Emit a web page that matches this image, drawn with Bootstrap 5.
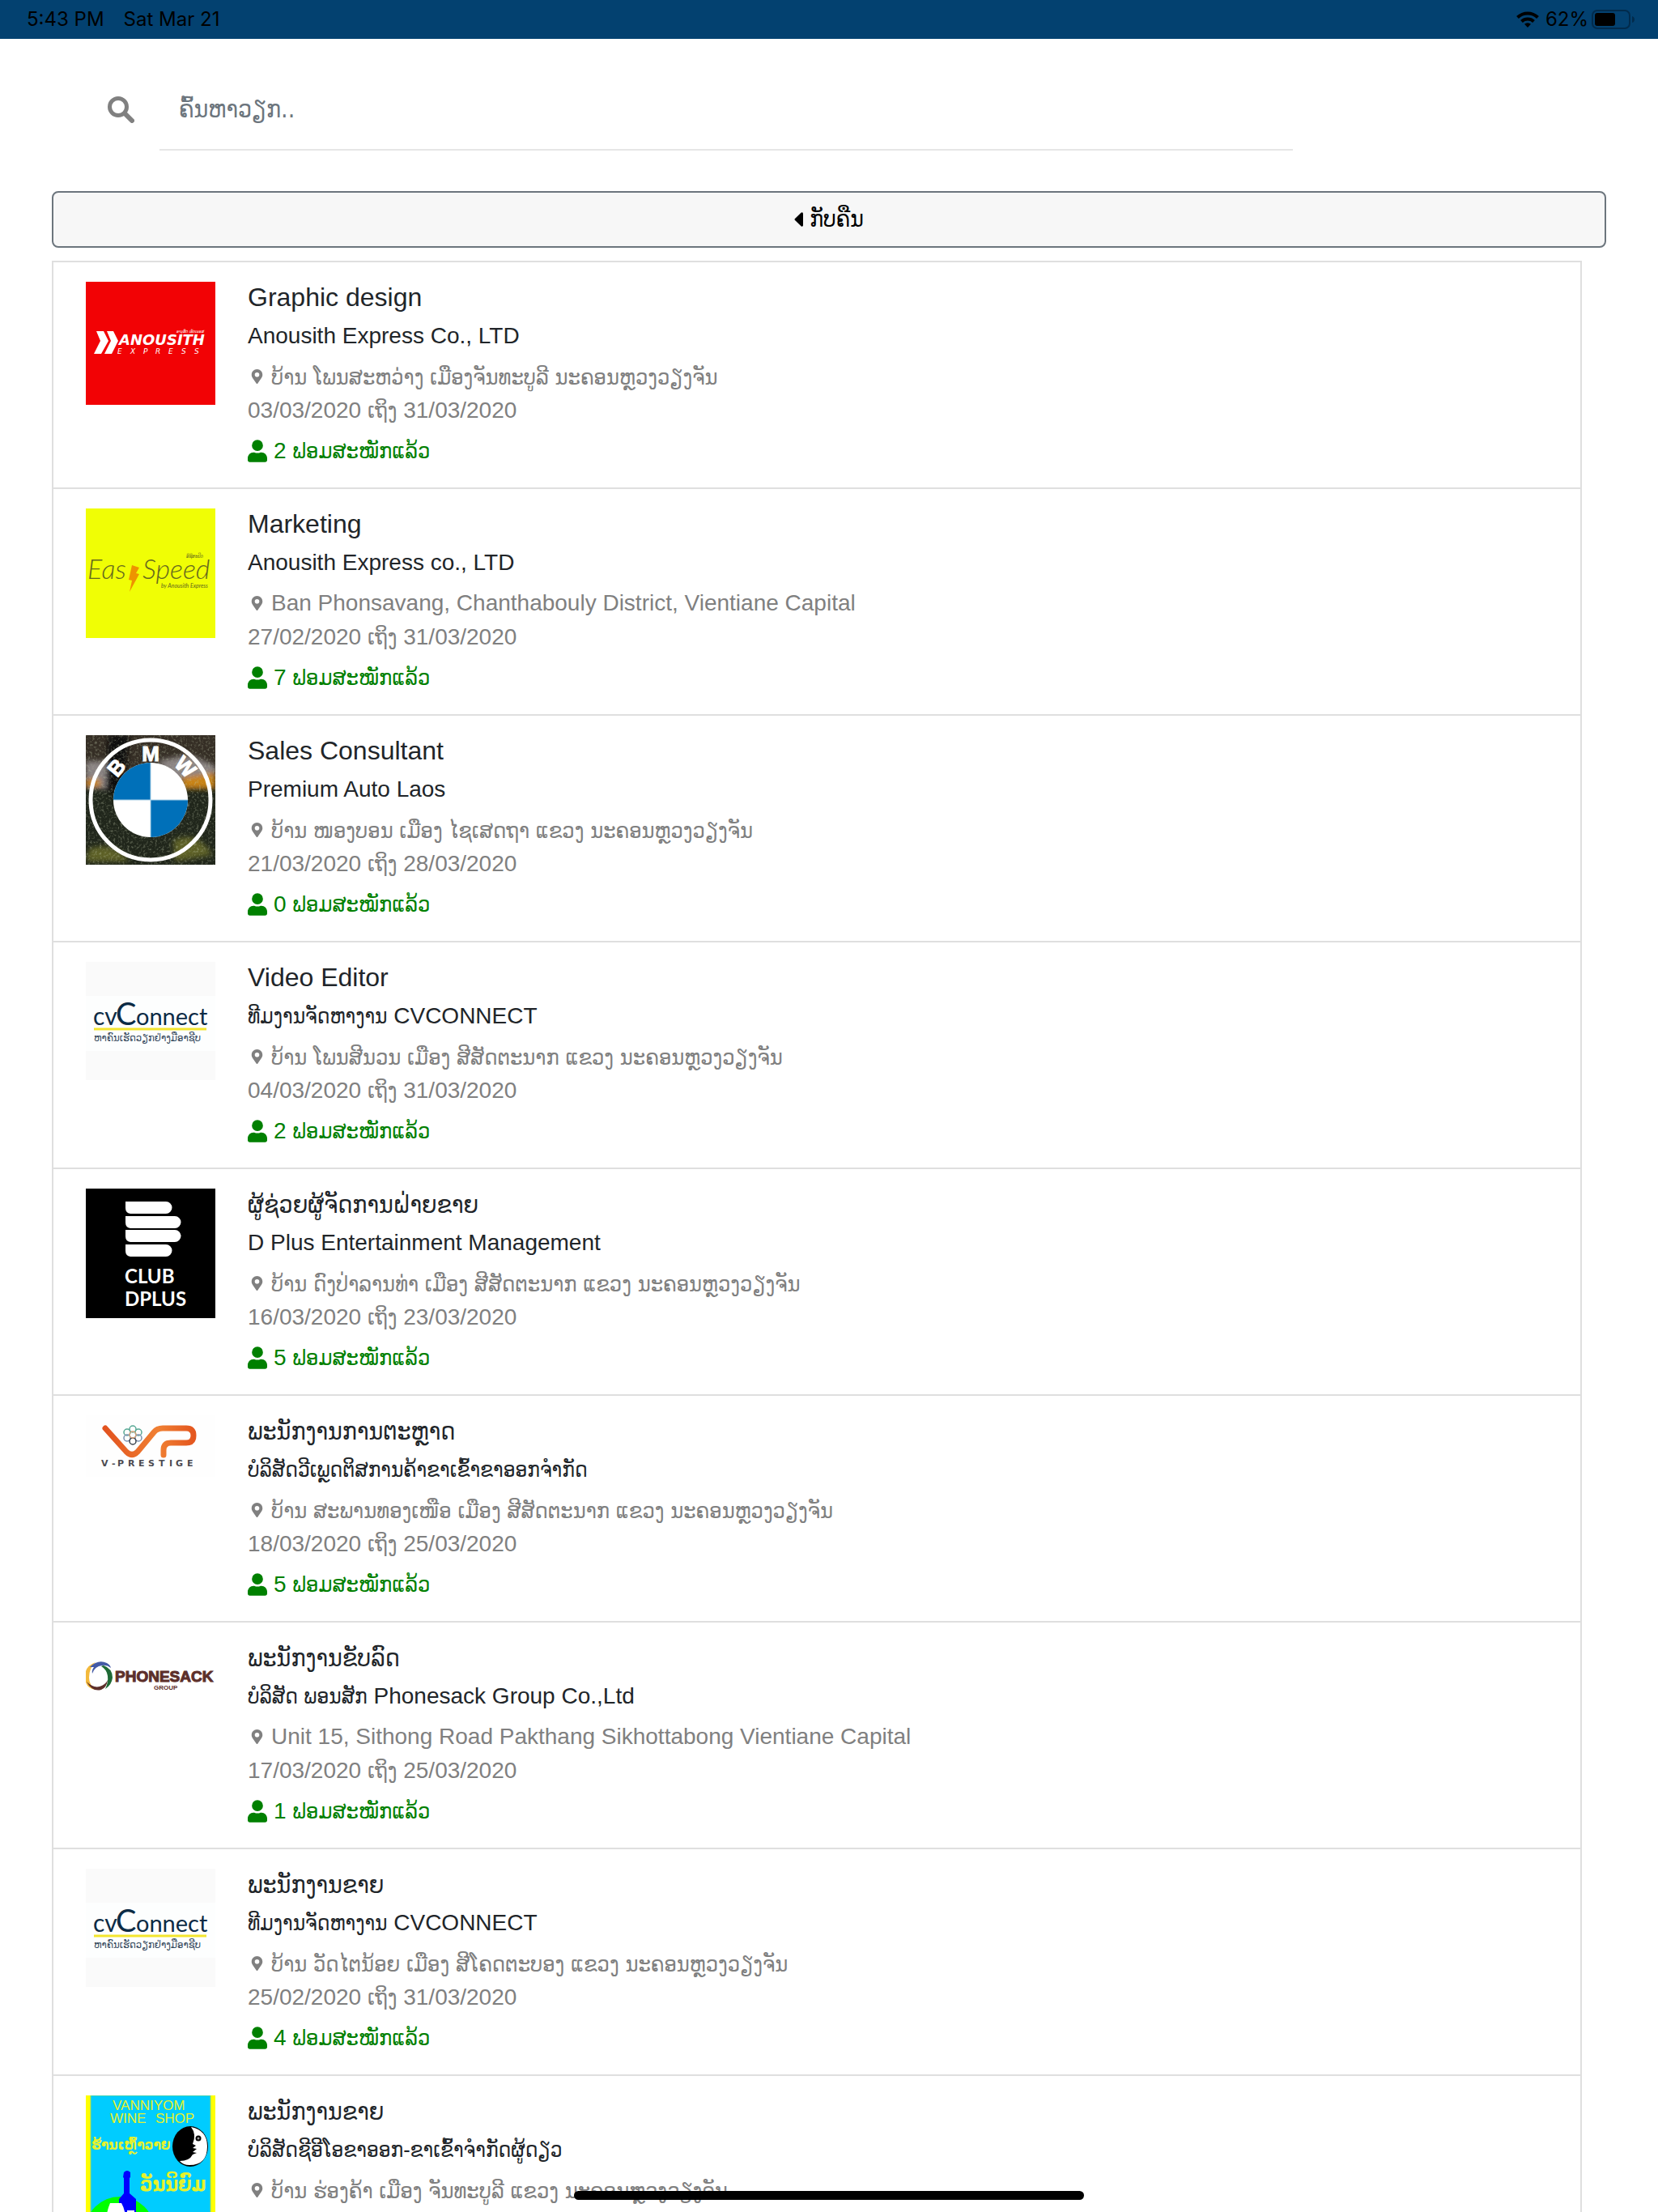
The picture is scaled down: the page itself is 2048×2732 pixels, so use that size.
<!DOCTYPE html>
<html lang="lo">
<head>
<meta charset="utf-8">
<meta name="viewport" content="width=device-width, initial-scale=1">
<title>ຄົ້ນຫາວຽກ</title>
<link href="https://cdn.jsdelivr.net/npm/bootstrap@5.3.0/dist/css/bootstrap.min.css" rel="stylesheet">
<script src="https://cdn.jsdelivr.net/npm/bootstrap@5.3.0/dist/js/bootstrap.bundle.min.js"></script>
<style>
  body { font: 28px/42px "Liberation Sans", "DejaVu Sans Condensed", sans-serif; color: #212529; background: #fff; }
  svg { flex: none; }
  .lao { font-family: "DejaVu Sans Condensed", "DejaVu Sans", sans-serif; font-size: 27px; line-height: 1; }
  .status-bar { height: 48px; padding: 0 28px 0 33px; background: #034170; color: #000; font: 24px/48px Inter, "Liberation Sans", sans-serif; }
  .page-body { padding: 0 64px; }
  .search-form { padding: 36px 0 50px 69px; gap: 31px; }
  .search-input { width: 100%; max-width: 1400px; height: 102px; padding: 0 24px; border: 0; border-bottom: 2px solid #e6e6e6; border-radius: 0; box-shadow: none !important; font: 30px/42px "DejaVu Sans Condensed", "DejaVu Sans", sans-serif; color: #495057; }
  .search-input::placeholder { color: #6c757d; opacity: 1; }
  .back-btn { height: 70px; border: 2px solid #6c757d; border-radius: 8px; background: #f7f7f7; color: #000; font: 28px/42px "DejaVu Sans Condensed", "DejaVu Sans", sans-serif; }
  .job-list { margin: 16px 30px 0 0; border: 2px solid #dfdfdf; border-bottom: 0; }
  .job { min-height: 280px; padding: 24px 40px; gap: 40px; border-bottom: 2px solid #dfdfdf; color: inherit; text-decoration: none; }
  .job-logo { width: 160px; flex: none; }
  .job-logo svg { display: block; }
  .job-title { font-size: 32px; line-height: 38px; font-weight: 400; }
  .job-title .lao { font-size: 30px; }
  .job-firm .lao { font-size: 26px; }
  .muted-line { min-height: 42px; color: #808080; }
  .place-line { gap: 6px; }
  .applied { color: #008000; }
  .home-bar { bottom: 15px; width: 630px; height: 11px; border-radius: 6px; background: #000; }
</style>
</head>
<body class="vh-100 overflow-hidden">

<svg width="0" height="0" class="position-absolute" aria-hidden="true">
  <symbol id="pin" viewBox="0 0 384 512"><path fill="currentColor" d="M172 502C27 291 0 270 0 192 0 86 86 0 192 0s192 86 192 192c0 78-27 99-172 310-10 13-30 13-40 0zM192 272a80 80 0 1 0 0-160 80 80 0 0 0 0 160z"/></symbol>
  <symbol id="user" viewBox="0 0 448 512"><path fill="currentColor" d="M224 256a128 128 0 1 0 0-256 128 128 0 0 0 0 256zm90 32h-17a174 174 0 0 1-146 0h-17C60 288 0 348 0 422v42c0 27 21 48 48 48h352c27 0 48-21 48-48v-42c0-74-60-134-134-134z"/></symbol>
</svg>

<div class="d-flex flex-column">
  <header class="status-bar d-flex justify-content-between align-items-center">
    <div class="d-flex"><span>5:43 PM</span><span class="ms-4">Sat Mar 21</span></div>
    <div class="d-flex align-items-center">
      <svg width="28" height="20" viewBox="0 0 28 20" aria-label="Wi-Fi"><g fill="none" stroke="#000" stroke-width="4"><path d="M1.500 7.500a18 18 0 0 1 25 0"/><path d="M6.500 12.500a11 11 0 0 1 15 0"/></g><path d="M14 20l-4-4.200a6 6 0 0 1 8 0z"/></svg>
      <span class="ms-2">62%</span>
      <svg class="ms-1" width="54" height="24" viewBox="0 0 54 24" aria-label="Battery"><rect x="1" y="1" width="46" height="22" rx="6" fill="none" stroke="#022b4c" stroke-width="2"/><rect x="4" y="4" width="25" height="16" rx="3"/><path d="M50 8q3 1 3 4t-3 4z" fill="#022b4c"/></svg>
    </div>
  </header>

  <main class="page-body">
    <form class="search-form d-flex align-items-center" role="search">
      <label for="job-search" class="d-flex"><svg width="33" height="33" viewBox="0 0 33 33" aria-label="ຄົ້ນຫາ"><circle cx="13" cy="13" r="10.500" fill="none" stroke="#808080" stroke-width="5"/><path d="M21.500 21.500L30 30" stroke="#808080" stroke-width="6" stroke-linecap="round"/></svg></label>
      <input id="job-search" class="search-input form-control" type="text" placeholder="ຄົ້ນຫາວຽກ..">
    </form>
    <button type="button" class="back-btn btn w-100 d-flex justify-content-center align-items-center"><svg class="me-2" width="11" height="18" viewBox="0 0 11 18" aria-hidden="true"><path d="M11 1.500v15q-1 2-2.500.7L1 10q-1-1 0-2L8.500.8Q10-.5 11 1.500z"/></svg>ກັບຄືນ</button>

    <section class="job-list">
      <a href="#" class="job d-flex">
        <div class="job-logo">
          <svg width="160" height="152" viewBox="0 0 160 152" aria-label="Anousith Express">
            <rect width="160" height="152" fill="#f20205"/>
            <g fill="#fff"><path d="M13 61h9l6 12-9 16h-9l8-16zM26 61h8l6 12-8 16h-9l8-16z"/>
            <text x="41" y="78" font-size="18" font-weight="700" font-style="italic" font-family="DejaVu Sans, sans-serif">ANOUSITH</text>
            <text x="39 55 71 86 102 118 134" y="89" font-size="9" font-style="italic" font-family="DejaVu Sans, sans-serif">EXPRESS</text>
            <text x="112" y="63" font-size="5" font-style="italic" font-family="DejaVu Sans Condensed, sans-serif">ອານຸສິດ ເອັກເພຣສ</text></g>
          </svg>
        </div>
        <div class="flex-grow-1">
          <h5 class="job-title mb-2">Graphic design</h5>
          <div class="job-firm mb-2">Anousith Express Co., LTD</div>
          <div class="muted-line place-line d-flex align-items-center"><svg width="23" height="18"><use href="#pin"/></svg><span class="lao">ບ້ານ ໂພນສະຫວ່າງ ເມືອງຈັນທະບູລີ ນະຄອນຫຼວງວຽງຈັນ</span></div>
          <div class="muted-line mb-2">03/03/2020 <span class="lao">ເຖິງ</span> 31/03/2020</div>
          <div class="applied d-flex align-items-center"><svg width="24" height="28" class="me-2"><use href="#user"/></svg><div>2 <span class="lao">ຟອມສະໝັກແລ້ວ</span></div></div>
        </div>
      </a>

      <a href="#" class="job d-flex">
        <div class="job-logo">
          <svg width="160" height="160" viewBox="0 0 160 160" aria-label="Easy Speed">
            <rect width="160" height="160" fill="#f0fe05"/>
            <g fill="#65681f" font-family="Lato, sans-serif" font-style="italic" font-weight="300"><text x="2" y="87" font-size="34">Eas</text><text x="70" y="87" font-size="34">Speed</text><text x="93" y="98" font-size="7" font-weight="400">by Anousith Express</text></g>
            <text x="124" y="61" font-size="6" font-style="italic" fill="#65681f" font-family="DejaVu Sans Condensed, sans-serif">ອີຊີສະປີດ</text>
            <path d="M57 70l9 3-4 7 4 1-12 22 3-14-4-1z" fill="#ee9300"/>
          </svg>
        </div>
        <div class="flex-grow-1">
          <h5 class="job-title mb-2">Marketing</h5>
          <div class="job-firm mb-2">Anousith Express co., LTD</div>
          <div class="muted-line place-line d-flex align-items-center"><svg width="23" height="18"><use href="#pin"/></svg><span>Ban Phonsavang, Chanthabouly District, Vientiane Capital</span></div>
          <div class="muted-line mb-2">27/02/2020 <span class="lao">ເຖິງ</span> 31/03/2020</div>
          <div class="applied d-flex align-items-center"><svg width="24" height="28" class="me-2"><use href="#user"/></svg><div>7 <span class="lao">ຟອມສະໝັກແລ້ວ</span></div></div>
        </div>
      </a>

      <a href="#" class="job d-flex">
        <div class="job-logo">
          <svg width="160" height="160" viewBox="0 0 160 160" aria-label="BMW">
            <defs>
              <filter id="leaves" x="0" y="0" width="100%" height="100%"><feTurbulence type="fractalNoise" baseFrequency=".35" numOctaves="3" seed="4"/><feColorMatrix values="0 0 0 0 .5  0 0 0 0 .55  0 0 0 0 .38  3 0 0 0 -1.500"/></filter>
              <filter id="soft"><feGaussianBlur stdDeviation="3"/></filter>
              <clipPath id="photo"><rect width="160" height="160"/></clipPath>
            </defs>
            <g clip-path="url(#photo)">
              <rect width="160" height="160" fill="#20261b"/>
              <rect width="160" height="66" fill="#352e25"/>
              <g filter="url(#soft)"><path d="M0 32h26v34H0zM88 32l40-8 32 14v18l-50-2z" fill="#8b8484"/><path d="M0 54h18v10H0zM118 52l42-6v20h-40z" fill="#c98314"/><path d="M28 0h26l-8 70H24z" fill="#100d0b"/><path d="M4 140q30-10 50 16H0zM108 130q30-14 48 18l-46 8z" fill="#5d6126"/></g>
              <rect width="160" height="160" filter="url(#leaves)" opacity=".4"/>
            </g>
            <circle cx="80" cy="80" r="74" fill="none" stroke="#fff" stroke-width="5"/>
            <circle cx="80" cy="80" r="46" fill="#fff"/>
            <path d="M80 80V34a46 46 0 0 0-46 46zM80 80v46a46 46 0 0 0 46-46z" fill="#0070b9"/>
            <path d="M34 80h92M80 34v92" stroke="#a9cfe6"/>
            <g fill="#fff" stroke="#fff" font-family="Liberation Sans, sans-serif" font-weight="700" font-size="26" text-anchor="middle"><text x="80" y="32">M</text><text transform="translate(38 40) rotate(-50)" y="9">B</text><text transform="translate(123 39) rotate(45)" y="9">W</text></g>
          </svg>
        </div>
        <div class="flex-grow-1">
          <h5 class="job-title mb-2">Sales Consultant</h5>
          <div class="job-firm mb-2">Premium Auto Laos</div>
          <div class="muted-line place-line d-flex align-items-center"><svg width="23" height="18"><use href="#pin"/></svg><span class="lao">ບ້ານ ໜອງບອນ ເມືອງ ໄຊເສດຖາ ແຂວງ ນະຄອນຫຼວງວຽງຈັນ</span></div>
          <div class="muted-line mb-2">21/03/2020 <span class="lao">ເຖິງ</span> 28/03/2020</div>
          <div class="applied d-flex align-items-center"><svg width="24" height="28" class="me-2"><use href="#user"/></svg><div>0 <span class="lao">ຟອມສະໝັກແລ້ວ</span></div></div>
        </div>
      </a>

      <a href="#" class="job d-flex">
        <div class="job-logo">
          <svg width="160" height="146" viewBox="0 0 160 146" aria-label="cvConnect">
            <rect width="160" height="146" fill="#fafafa"/><rect y="42" width="160" height="68" fill="#fdfefe"/>
            <g fill="#0c2b45" font-family="Lato, sans-serif"><text x="9" y="78" font-size="30">cv</text><text x="37" y="78" font-size="38">C</text><text x="62" y="78" font-size="29">onnect</text></g>
            <path d="M10 83h139" stroke="#f3e52e" stroke-width="3"/>
            <text x="10" y="98" font-size="13" fill="#33475b" font-family="DejaVu Sans Condensed, sans-serif">ຫາຄົນເຮັດວຽກຢ່າງມືອາຊີບ</text>
          </svg>
        </div>
        <div class="flex-grow-1">
          <h5 class="job-title mb-2">Video Editor</h5>
          <div class="job-firm mb-2"><span class="lao">ທີມງານຈັດຫາງານ</span> CVCONNECT</div>
          <div class="muted-line place-line d-flex align-items-center"><svg width="23" height="18"><use href="#pin"/></svg><span class="lao">ບ້ານ ໂພນສີນວນ ເມືອງ ສີສັດຕະນາກ ແຂວງ ນະຄອນຫຼວງວຽງຈັນ</span></div>
          <div class="muted-line mb-2">04/03/2020 <span class="lao">ເຖິງ</span> 31/03/2020</div>
          <div class="applied d-flex align-items-center"><svg width="24" height="28" class="me-2"><use href="#user"/></svg><div>2 <span class="lao">ຟອມສະໝັກແລ້ວ</span></div></div>
        </div>
      </a>

      <a href="#" class="job d-flex">
        <div class="job-logo">
          <svg width="160" height="160" viewBox="0 0 160 160" aria-label="Club Dplus">
            <rect width="160" height="160"/>
            <g fill="#fff"><path d="M49 16h50a7.500 7.500 0 0 1 0 15H55q-6-1-6-7zM49 34h61a7.500 7.500 0 0 1 0 15H55q-6-1-6-7zM49 51h61a7.500 7.500 0 0 1 0 15H55q-6-1-6-7zM49 69h50a7.500 7.500 0 0 1 0 15H55q-6-1-6-7z"/>
            <g font-family="Lato, sans-serif" font-size="24" font-weight="700"><text x="48" y="117">CLUB</text><text x="48" y="145">DPLUS</text></g></g>
          </svg>
        </div>
        <div class="flex-grow-1">
          <h5 class="job-title mb-2"><span class="lao">ຜູ້ຊ່ວຍຜູ້ຈັດການຝ່າຍຂາຍ</span></h5>
          <div class="job-firm mb-2">D Plus Entertainment Management</div>
          <div class="muted-line place-line d-flex align-items-center"><svg width="23" height="18"><use href="#pin"/></svg><span class="lao">ບ້ານ ດົງປ່າລານທ່າ ເມືອງ ສີສັດຕະນາກ ແຂວງ ນະຄອນຫຼວງວຽງຈັນ</span></div>
          <div class="muted-line mb-2">16/03/2020 <span class="lao">ເຖິງ</span> 23/03/2020</div>
          <div class="applied d-flex align-items-center"><svg width="24" height="28" class="me-2"><use href="#user"/></svg><div>5 <span class="lao">ຟອມສະໝັກແລ້ວ</span></div></div>
        </div>
      </a>

      <a href="#" class="job d-flex">
        <div class="job-logo">
          <svg width="160" height="76" viewBox="0 0 160 76" aria-label="V-Prestige">
            <rect width="160" height="76" fill="#fefefe"/>
            <defs><linearGradient id="vp"><stop offset="0" stop-color="#e2531f"/><stop offset=".6" stop-color="#f08033"/><stop offset="1" stop-color="#e4571f"/></linearGradient></defs>
            <path d="M24 16l26 29q7 7 14 0l20-24q4-5 11-5h29q9 0 9 9t-9 9h-19q-9 0-9 9v6" fill="none" stroke="url(#vp)" stroke-width="7" stroke-linecap="round" stroke-linejoin="round"/>
            <g fill="none" stroke-width="1.500"><g stroke="#57a894"><circle cx="58" cy="17" r="4"/><circle cx="65" cy="21" r="4"/><circle cx="51" cy="21" r="4"/></g><g stroke="#7a8fae"><circle cx="65" cy="28" r="4"/><circle cx="51" cy="28" r="4"/></g><circle cx="58" cy="32" r="4" stroke="#39424c"/><circle cx="58" cy="24" r="4" stroke="#d6a277"/></g>
            <text x="19 32 39 52 65 77 90 103 111 125" y="63" font-size="11" font-weight="700" fill="#4b4a50" font-family="DejaVu Sans, sans-serif">V-PRESTIGE</text>
          </svg>
        </div>
        <div class="flex-grow-1">
          <h5 class="job-title mb-2"><span class="lao">ພະນັກງານການຕະຫຼາດ</span></h5>
          <div class="job-firm mb-2"><span class="lao">ບໍລິສັດວີເພຼດຕິສການຄ້າຂາເຂົ້າຂາອອກຈໍາກັດ</span></div>
          <div class="muted-line place-line d-flex align-items-center"><svg width="23" height="18"><use href="#pin"/></svg><span class="lao">ບ້ານ ສະພານທອງເໜືອ ເມືອງ ສີສັດຕະນາກ ແຂວງ ນະຄອນຫຼວງວຽງຈັນ</span></div>
          <div class="muted-line mb-2">18/03/2020 <span class="lao">ເຖິງ</span> 25/03/2020</div>
          <div class="applied d-flex align-items-center"><svg width="24" height="28" class="me-2"><use href="#user"/></svg><div>5 <span class="lao">ຟອມສະໝັກແລ້ວ</span></div></div>
        </div>
      </a>

      <a href="#" class="job d-flex">
        <div class="job-logo">
          <svg width="160" height="84" viewBox="0 0 160 84" aria-label="Phonesack Group">
            <path d="M12 25Q2 29 0 36v14q3 8 12 9-8-6-8-15 0-12 8-19z" fill="#f3b93c"/>
            <path d="M5 31q10-10 21-5 4 2 5 6-5-4-11-3-9 1-12 10-1-4 2-8-3 0-5 0z" fill="#4359a5"/>
            <path d="M22 29q11 4 11 15-1 9-9 14 4-8 3-16-1-8-8-12 2-1 3-1z" fill="#1f6a35"/>
            <path d="M1 49q8 8 16 6 7-2 10-8-1 9-8 12-11 3-18-10z" fill="#5d2f2a"/>
            <g fill="#5d2f2a" font-family="Liberation Sans, sans-serif" font-weight="700"><text x="36" y="49" font-size="19" stroke="#5d2f2a">PHONESACK</text><text x="84" y="59" font-size="8">GROUP</text></g>
          </svg>
        </div>
        <div class="flex-grow-1">
          <h5 class="job-title mb-2"><span class="lao">ພະນັກງານຂັບລົດ</span></h5>
          <div class="job-firm mb-2"><span class="lao">ບໍລິສັດ ພອນສັກ</span> Phonesack Group Co.,Ltd</div>
          <div class="muted-line place-line d-flex align-items-center"><svg width="23" height="18"><use href="#pin"/></svg><span>Unit 15, Sithong Road Pakthang Sikhottabong Vientiane Capital</span></div>
          <div class="muted-line mb-2">17/03/2020 <span class="lao">ເຖິງ</span> 25/03/2020</div>
          <div class="applied d-flex align-items-center"><svg width="24" height="28" class="me-2"><use href="#user"/></svg><div>1 <span class="lao">ຟອມສະໝັກແລ້ວ</span></div></div>
        </div>
      </a>

      <a href="#" class="job d-flex">
        <div class="job-logo">
          <svg width="160" height="146" viewBox="0 0 160 146" aria-label="cvConnect">
            <rect width="160" height="146" fill="#fafafa"/><rect y="42" width="160" height="68" fill="#fdfefe"/>
            <g fill="#0c2b45" font-family="Lato, sans-serif"><text x="9" y="78" font-size="30">cv</text><text x="37" y="78" font-size="38">C</text><text x="62" y="78" font-size="29">onnect</text></g>
            <path d="M10 83h139" stroke="#f3e52e" stroke-width="3"/>
            <text x="10" y="98" font-size="13" fill="#33475b" font-family="DejaVu Sans Condensed, sans-serif">ຫາຄົນເຮັດວຽກຢ່າງມືອາຊີບ</text>
          </svg>
        </div>
        <div class="flex-grow-1">
          <h5 class="job-title mb-2"><span class="lao">ພະນັກງານຂາຍ</span></h5>
          <div class="job-firm mb-2"><span class="lao">ທີມງານຈັດຫາງານ</span> CVCONNECT</div>
          <div class="muted-line place-line d-flex align-items-center"><svg width="23" height="18"><use href="#pin"/></svg><span class="lao">ບ້ານ ວັດໄຕນ້ອຍ ເມືອງ ສີໂຄດຕະບອງ ແຂວງ ນະຄອນຫຼວງວຽງຈັນ</span></div>
          <div class="muted-line mb-2">25/02/2020 <span class="lao">ເຖິງ</span> 31/03/2020</div>
          <div class="applied d-flex align-items-center"><svg width="24" height="28" class="me-2"><use href="#user"/></svg><div>4 <span class="lao">ຟອມສະໝັກແລ້ວ</span></div></div>
        </div>
      </a>

      <a href="#" class="job d-flex">
        <div class="job-logo">
          <svg width="160" height="200" viewBox="0 0 160 200" aria-label="Vanniyom Wine Shop">
            <rect width="160" height="200" fill="#ff0"/><rect x="6" width="148" height="200" fill="#0cf" stroke="#8fdc6a"/>
            <circle cx="42" cy="168" r="43" fill="#0f0"/>
            <path d="M47 95q4-4 8 0v6l-1 1v19l8 7v72H41v-72l6-7v-19l-1-1z" fill="#00f"/>
            <path d="M30 133h14q8 14 4 36H26q-3-20 4-36z" fill="#fff"/><rect x="51" y="142" width="9" height="20" fill="#fff"/>
            <g fill="#e6f22a" font-family="Liberation Sans, sans-serif" font-size="17"><text x="33" y="18">VANNIYOM</text><text x="30" y="34">WINE</text><text x="86" y="34">SHOP</text></g>
            <g fill="#e6f22a" font-family="DejaVu Sans Condensed, sans-serif" font-weight="700"><text x="7" y="67" font-size="17">ຮ້ານເຫຼົ້າວາຍ</text><text x="67" y="118" font-size="24">ວັນນິຍົມ</text></g>
            <ellipse cx="129" cy="63" rx="22" ry="25"/><path d="M130 39q20 4 20 24 0 23-22 23-8 0-12-5 12 0 16-8l5-2-5-1 5-4-5-1 4-3-4-2q5-12-2-21z" fill="#fff"/><circle cx="139" cy="53" r="3.500"/><circle cx="139" cy="53" r="1.500" fill="#999"/>
          </svg>
        </div>
        <div class="flex-grow-1">
          <h5 class="job-title mb-2"><span class="lao">ພະນັກງານຂາຍ</span></h5>
          <div class="job-firm mb-2"><span class="lao">ບໍລິສັດຊີອີໂອຂາອອກ-ຂາເຂົ້າຈໍາກັດຜູ້ດຽວ</span></div>
          <div class="muted-line place-line d-flex align-items-center"><svg width="23" height="18"><use href="#pin"/></svg><span class="lao">ບ້ານ ຮ່ອງຄ້າ ເມືອງ ຈັນທະບູລີ ແຂວງ ນະຄອນຫຼວງວຽງຈັນ</span></div>
        </div>
      </a>
    </section>
  </main>
</div>
<div class="home-bar position-fixed start-50 translate-middle-x"></div>
</body>
</html>
